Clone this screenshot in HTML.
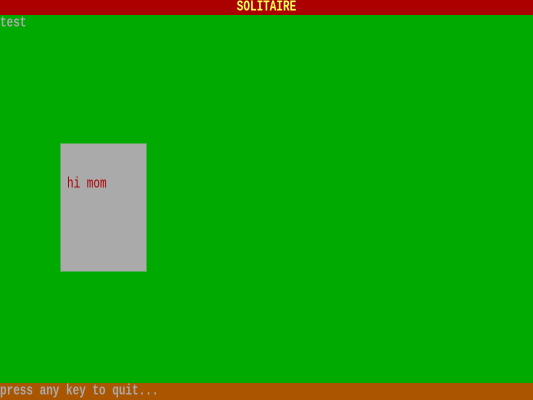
<!DOCTYPE html>
<html><head><style>
html,body{margin:0;padding:0;width:533px;height:400px;overflow:hidden;background:#00aa00;font-family:"Liberation Mono",monospace;font-size:11px;}
.t{display:inline-block;transform:scaleY(1.35);transform-origin:0 50%;font-weight:bold;}
.top{position:absolute;left:0;top:0;width:533px;height:15px;background:#aa0000;color:#ffff55;font-weight:bold;text-align:center;line-height:16px;}
.top .t{transform-origin:50% 50%;}
.test{position:absolute;left:0;top:16px;color:#aaaaaa;line-height:16px;}
.card{position:absolute;left:60px;top:143px;width:85px;height:127px;background:#aaaaaa;border:1px solid #55aa55;}
.card span.w{position:absolute;left:6px;top:33px;color:#aa0000;line-height:16px;}
.bot{position:fixed;left:0;top:383px;bottom:0;width:533px;background:#aa5500;color:#aaaaaa;line-height:18px;overflow:hidden;}
</style></head><body>
<div class="top"><span class="t">SOLITAIRE</span></div>
<div class="test"><span class="t">test</span></div>
<div class="card"><span class="w"><span class="t" style="font-weight:normal">hi mom</span></span></div>
<div class="bot"><span class="t">press any key to quit...</span></div>
</body></html>
